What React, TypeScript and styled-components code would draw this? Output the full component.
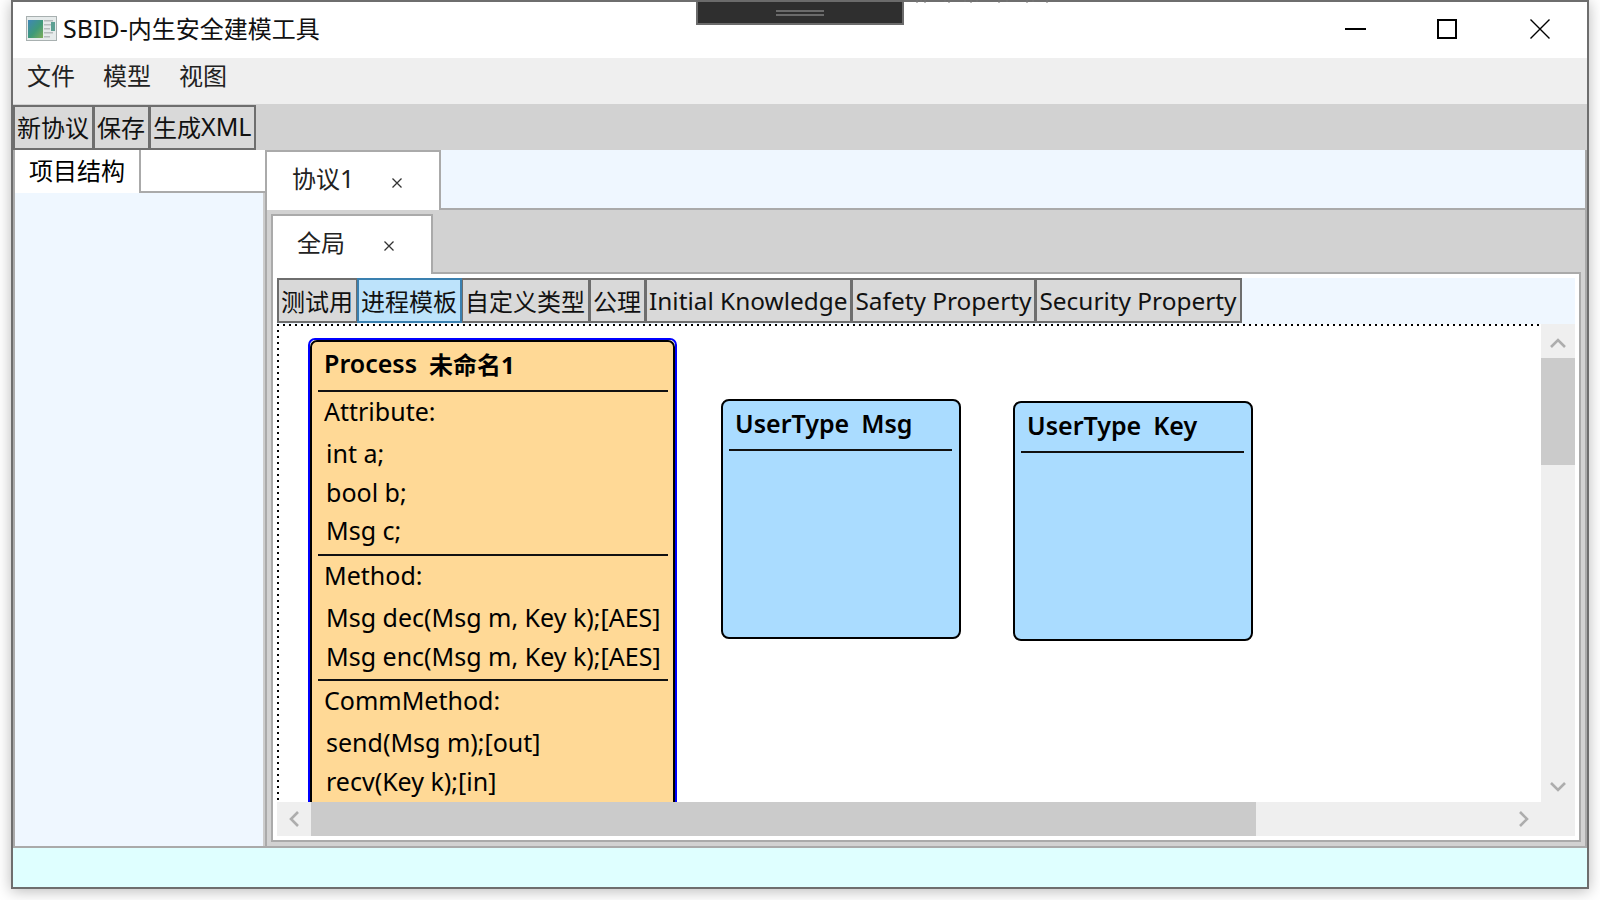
import React from "react";
import styled, { createGlobalStyle } from "styled-components";

const Global = createGlobalStyle`
  html, body { margin: 0; padding: 0; width: 1600px; height: 900px; background: #ffffff; overflow: hidden; }
  body { font-family: "Noto Sans", "Noto Sans CJK SC", sans-serif; font-size: 24px; color: #000; }
  * { box-sizing: border-box; }
`;

const Page = styled.div`
  position: relative;
  width: 1600px;
  height: 900px;
  padding-left: 11px;
  overflow: hidden;
`;
const Window = styled.div`
  width: 1578px;
  height: 889px;
  border: 2px solid #6e6e6e;
  background: #fff;
  box-shadow: 0 2px 14px rgba(0, 0, 0, 0.28);
  display: flex;
  flex-direction: column;
`;
const Lat = styled.span<{ $size?: number }>`
  font-size: ${(p) => p.$size ?? 24.4}px;
`;
const TitleBar = styled.header`
  height: 56px;
  flex: none;
  display: flex;
  align-items: center;
  background: #fff;
  padding-left: 13px;
`;
const AppIcon = styled.svg`
  width: 31px;
  height: 25px;
  margin-right: 6px;
  margin-top: -3px;
  flex: none;
`;
const TitleText = styled.div`
  line-height: 1;
  color: #111;
  white-space: nowrap;
  margin-top: -3px;
`;
const Controls = styled.div`
  margin-left: auto;
  margin-right: 2px;
  display: flex;
`;
const ControlButton = styled.div`
  width: 92px;
  height: 56px;
  padding-bottom: 2px;
  display: flex;
  align-items: center;
  justify-content: center;
`;
const CloseGlyph = styled.svg`
  width: 20px;
  height: 20px;
  margin-left: 2px;
`;
const MenuBar = styled.nav`
  height: 46px;
  flex: none;
  background: #efefef;
  display: flex;
  align-items: center;
  gap: 28px;
  padding: 0 0 13px 14px;
  color: #222;
`;
const ToolButton = styled.div<{ $active?: boolean }>`
  height: 45px;
  padding: 0 3px 0 2px;
  margin-right: -1px;
  position: relative;
  z-index: ${(p) => (p.$active ? 1 : 0)};
  display: flex;
  align-items: center;
  white-space: nowrap;
  border: 2px solid ${(p) => (p.$active ? "#3a80b0" : "#6e6e6e")};
  background: ${(p) => (p.$active ? "#bde3fb" : "#d9d9d9")};
  color: #111;
`;
const ToolBar = styled.div`
  height: 46px;
  flex: none;
  background: #d2d2d2;
  display: flex;
  align-items: center;
  ${ToolButton} {
    padding-bottom: 2px;
  }
`;
const Main = styled.div`
  flex: 1;
  min-height: 0;
  display: flex;
`;
const LeftPanel = styled.aside`
  width: 252px;
  flex: none;
  border-left: 2px solid #aaa;
  border-bottom: 2px solid #aaa;
  display: flex;
  flex-direction: column;
`;
const LeftStrip = styled.div`
  height: 43px;
  flex: none;
  display: flex;
  background: #fff;
`;
const LeftTab = styled.div`
  width: 126px;
  padding: 0 0 4px 14px;
  display: flex;
  align-items: center;
  border-right: 2px solid #aaa;
  background: #fff;
`;
const LeftStripRest = styled.div`
  flex: 1;
  border-bottom: 2px solid #aaa;
`;
const LeftPane = styled.div`
  flex: 1;
  background: #eff7ff;
  border-right: 2px solid #ccc;
`;
const RightPanel = styled.section`
  flex: 1;
  min-width: 0;
  display: flex;
  flex-direction: column;
  background: #d2d2d2;
  border-left: 2px solid #aaa;
  border-right: 2px solid #aaa;
  border-bottom: 2px solid #aaa;
`;
const TabStrip = styled.div`
  height: 60px;
  flex: none;
  display: flex;
  background: #eff7ff;
  border-bottom: 2px solid #aaa;
`;
const InnerStrip = styled.div`
  height: 60px;
  flex: none;
  display: flex;
  background: #d2d2d2;
  border-bottom: 2px solid #aaa;
`;
const DocTab = styled.div<{ $width: number; $inner?: boolean }>`
  width: ${(p) => p.$width}px;
  height: 60px;
  display: flex;
  align-items: center;
  background: #fff;
  border-top: 2px solid #aaa;
  border-right: 2px solid #aaa;
  border-left: ${(p) => (p.$inner ? "2px solid #aaa" : "none")};
  padding-left: ${(p) => (p.$inner ? 24 : 25)}px;
  padding-bottom: ${(p) => (p.$inner ? 8 : 8)}px;
  color: #222;
`;
const TabLabel = styled.span<{ $width: number }>`
  width: ${(p) => p.$width}px;
  flex: none;
  white-space: nowrap;
`;
const CloseMark = styled.svg<{ $drop: number }>`
  width: 12px;
  height: 12px;
  margin-top: ${(p) => p.$drop}px;
  flex: none;
`;
const OuterBody = styled.div`
  flex: 1;
  min-height: 0;
  padding: 4px;
  display: flex;
`;
const InnerPanel = styled.div`
  flex: 1;
  min-width: 0;
  display: flex;
  flex-direction: column;
`;
const Pane = styled.div`
  flex: 1;
  min-height: 0;
  background: #fff;
  padding: 4px;
  border-left: 2px solid #aaa;
  border-right: 2px solid #aaa;
  border-bottom: 2px solid #aaa;
  display: flex;
  flex-direction: column;
`;
const TemplateBar = styled.div`
  height: 46px;
  flex: none;
  display: flex;
  background: #eff7ff;
  align-items: flex-start;
`;
const ScrollArea = styled.div`
  flex: 1;
  min-height: 0;
  display: grid;
  grid-template-columns: 1fr 34px;
  grid-template-rows: 1fr 34px;
  background: #efefef;
`;
const Canvas = styled.div`
  position: relative;
  overflow: hidden;
  border-top: 2px solid transparent;
  border-left: 2px solid transparent;
  background-color: #fff;
  background-image: linear-gradient(90deg, #000 2px, transparent 2px),
    linear-gradient(180deg, #000 2px, transparent 2px);
  background-size: 6px 2px, 2px 6px;
  background-repeat: repeat-x, repeat-y;
  background-origin: border-box;
  background-position: 0 0, 0 0;
`;
const VBar = styled.div`
  display: flex;
  flex-direction: column;
  background: #efefef;
`;
const HBar = styled.div`
  display: flex;
  background: #efefef;
`;
const ArrowBox = styled.div<{ $down?: boolean }>`
  width: 34px;
  height: 34px;
  flex: none;
  display: flex;
  align-items: center;
  justify-content: center;
  padding-top: ${(p) => (p.$down ? 3 : 0)}px;
`;
const VThumb = styled.div`
  height: 107px;
  background: #cbcbcb;
`;
const HThumb = styled.div`
  width: 945px;
  background: #cbcbcb;
`;
const Spacer = styled.div`
  flex: 1;
`;
const Corner = styled.div`
  background: #efefef;
`;
const ProcessOutline = styled.div`
  position: absolute;
  left: 29px;
  top: 12px;
  width: 369px;
  height: 560px;
  border: 2px solid #0000ff;
  border-radius: 7px;
`;
const ProcessCard = styled.div`
  height: 100%;
  border: 2px solid #000;
  border-radius: 7px;
  background: #ffd996;
`;
const TypeCard = styled.div<{ $x: number; $y: number }>`
  position: absolute;
  left: ${(p) => p.$x}px;
  top: ${(p) => p.$y}px;
  width: 240px;
  height: 240px;
  border: 2px solid #000;
  border-radius: 8px;
  background: #aadcff;
`;
const CardTitle = styled.div<{ $lift: number }>`
  height: 48px;
  padding: 0 0 ${(p) => p.$lift}px 12px;
  display: flex;
  align-items: center;
  font-weight: 700;
  white-space: pre;
  color: #000;
`;
const TitleWord = styled.span`
  font-size: 25px;
  font-weight: 600;
  margin-right: 12px;
`;
const Divider = styled.div`
  height: 2px;
  margin: 0 5px 0 6px;
  background: #111;
`;
const TypeDivider = styled(Divider)`
  margin-right: 7px;
`;
const SectionLabel = styled.div`
  height: 40px;
  padding: 0 0 2px 12px;
  font-size: 25px;
  display: flex;
  align-items: center;
  white-space: nowrap;
`;
const SectionItems = styled.div<{ $bottom: number }>`
  padding: 2px 0 ${(p) => p.$bottom + 1}px 14px;
`;
const ItemRow = styled.div`
  height: 38.4px;
  font-size: 25px;
  display: flex;
  align-items: center;
  white-space: nowrap;
`;
const StatusBar = styled.footer`
  height: 39px;
  flex: none;
  background: #dfffff;
`;
const Handle = styled.div`
  position: absolute;
  left: 696px;
  top: 0;
  width: 208px;
  height: 25px;
  background: #2f2f2f;
  border: 2px solid #6b6b6b;
  display: flex;
  flex-direction: column;
  align-items: center;
  justify-content: center;
  gap: 2px;
`;
const HandleLine = styled.div`
  width: 48px;
  height: 2px;
  background: #6b6b6b;
`;
const PeekMarks = styled.svg`
  position: absolute;
  left: 915px;
  top: 0;
  width: 135px;
  height: 3px;
`;

const Close = ({ drop }: { drop: number }) => (
  <CloseMark $drop={drop} viewBox="0 0 12 12">
    <path d="M1.5 1.5l9 9M10.5 1.5l-9 9" stroke="#333" strokeWidth="1.3" fill="none" />
  </CloseMark>
);
const Chevron = ({ d, w, h, vb }: { d: string; w: number; h: number; vb: string }) => (
  <svg width={w} height={h} viewBox={vb}>
    <path d={d} stroke="#adadad" strokeWidth="2.6" fill="none" />
  </svg>
);

export default function App() {
  return (
    <Page>
      <Global />
      <Window>
        <TitleBar>
          <AppIcon viewBox="0 0 31 25">
            <defs>
              <linearGradient id="g" x1="0" y1="0" x2="1" y2="1">
                <stop offset="0" stopColor="#3f86b8" />
                <stop offset="0.55" stopColor="#3f9a78" />
                <stop offset="1" stopColor="#7fae5a" />
              </linearGradient>
            </defs>
            <rect x="0.5" y="0.5" width="30" height="24" fill="#e6ebeb" stroke="#a8b0b0" />
            <rect x="2" y="4" width="15" height="18" fill="url(#g)" />
            <rect x="18" y="4" width="9" height="1.5" fill="#b5bcbc" />
            <rect x="18" y="8" width="7" height="1.5" fill="#b5bcbc" />
            <rect x="25" y="6" width="4" height="9" fill="#5d9f92" />
            <rect x="18" y="12" width="6" height="1.5" fill="#b5bcbc" />
            <rect x="18" y="16" width="9" height="1.5" fill="#b5bcbc" />
            <rect x="18" y="20" width="6" height="1.5" fill="#b5bcbc" />
          </AppIcon>
          <TitleText>
            <Lat $size={25}>SBID-</Lat>内生安全建模工具
          </TitleText>
          <Controls>
            <ControlButton>
              <svg width="21" height="2" viewBox="0 0 21 2">
                <rect width="21" height="2" fill="#000" />
              </svg>
            </ControlButton>
            <ControlButton>
              <svg width="20" height="20" viewBox="0 0 20 20">
                <rect x="1" y="1" width="18" height="18" fill="none" stroke="#000" strokeWidth="2" />
              </svg>
            </ControlButton>
            <ControlButton>
              <CloseGlyph viewBox="0 0 20 20">
                <path d="M0.5 0.5l19 19M19.5 0.5l-19 19" stroke="#000" strokeWidth="1.4" fill="none" />
              </CloseGlyph>
            </ControlButton>
          </Controls>
        </TitleBar>
        <MenuBar>
          <span>文件</span>
          <span>模型</span>
          <span>视图</span>
        </MenuBar>
        <ToolBar>
          <ToolButton>新协议</ToolButton>
          <ToolButton>保存</ToolButton>
          <ToolButton>
            生成<Lat $size={25}>XML</Lat>
          </ToolButton>
        </ToolBar>
        <Main>
          <LeftPanel>
            <LeftStrip>
              <LeftTab>项目结构</LeftTab>
              <LeftStripRest />
            </LeftStrip>
            <LeftPane />
          </LeftPanel>
          <RightPanel>
            <TabStrip>
              <DocTab $width={174}>
                <TabLabel $width={99}>
                  协议<Lat $size={25}>1</Lat>
                </TabLabel>
                <Close drop={12} />
              </DocTab>
            </TabStrip>
            <OuterBody>
              <InnerPanel>
                <InnerStrip>
                  <DocTab $width={162} $inner>
                    <TabLabel $width={86}>全局</TabLabel>
                    <Close drop={10} />
                  </DocTab>
                </InnerStrip>
                <Pane>
                  <TemplateBar>
                    <ToolButton>测试用</ToolButton>
                    <ToolButton $active>进程模板</ToolButton>
                    <ToolButton>自定义类型</ToolButton>
                    <ToolButton>公理</ToolButton>
                    <ToolButton>
                      <Lat>Initial Knowledge</Lat>
                    </ToolButton>
                    <ToolButton>
                      <Lat>Safety Property</Lat>
                    </ToolButton>
                    <ToolButton>
                      <Lat>Security Property</Lat>
                    </ToolButton>
                  </TemplateBar>
                  <ScrollArea>
                    <Canvas>
                      <ProcessOutline>
                        <ProcessCard>
                          <CardTitle $lift={6}>
                            <TitleWord>Process</TitleWord>未命名1
                          </CardTitle>
                          <Divider />
                          <SectionLabel>Attribute:</SectionLabel>
                          <SectionItems $bottom={4}>
                            <ItemRow>int a;</ItemRow>
                            <ItemRow>bool b;</ItemRow>
                            <ItemRow>Msg c;</ItemRow>
                          </SectionItems>
                          <Divider />
                          <SectionLabel>Method:</SectionLabel>
                          <SectionItems $bottom={3}>
                            <ItemRow>Msg dec(Msg m, Key k);[AES]</ItemRow>
                            <ItemRow>Msg enc(Msg m, Key k);[AES]</ItemRow>
                          </SectionItems>
                          <Divider />
                          <SectionLabel>CommMethod:</SectionLabel>
                          <SectionItems $bottom={4}>
                            <ItemRow>send(Msg m);[out]</ItemRow>
                            <ItemRow>recv(Key k);[in]</ItemRow>
                          </SectionItems>
                        </ProcessCard>
                      </ProcessOutline>
                      <TypeCard $x={442} $y={73}>
                        <CardTitle $lift={4}>
                          <TitleWord>UserType</TitleWord>
                          <TitleWord>Msg</TitleWord>
                        </CardTitle>
                        <TypeDivider />
                      </TypeCard>
                      <TypeCard $x={734} $y={75}>
                        <CardTitle $lift={4}>
                          <TitleWord>UserType</TitleWord>
                          <TitleWord>Key</TitleWord>
                        </CardTitle>
                        <TypeDivider />
                      </TypeCard>
                    </Canvas>
                    <VBar>
                      <ArrowBox $down>
                        <Chevron vb="0 0 16 10" w={16} h={10} d="M1 9l7-7 7 7" />
                      </ArrowBox>
                      <VThumb />
                      <Spacer />
                      <ArrowBox $down>
                        <Chevron vb="0 0 16 10" w={16} h={10} d="M1 1l7 7 7-7" />
                      </ArrowBox>
                    </VBar>
                    <HBar>
                      <ArrowBox>
                        <Chevron vb="0 0 10 16" w={10} h={16} d="M9 1L2 8l7 7" />
                      </ArrowBox>
                      <HThumb />
                      <Spacer />
                      <ArrowBox>
                        <Chevron vb="0 0 10 16" w={10} h={16} d="M1 1l7 7-7 7" />
                      </ArrowBox>
                    </HBar>
                    <Corner />
                  </ScrollArea>
                </Pane>
              </InnerPanel>
            </OuterBody>
          </RightPanel>
        </Main>
        <StatusBar />
      </Window>
      <PeekMarks viewBox="0 0 135 3">
        <path
          d="M2 0v3M6 0v2M10 0v3M30 0v2M34 0v3M50 0v2M56 0v3M62 0v2M84 0v3M92 0v2M112 0v3M118 0v2M132 0v3"
          stroke="#777"
          strokeWidth="1"
        />
      </PeekMarks>
      <Handle>
        <HandleLine />
        <HandleLine />
      </Handle>
    </Page>
  );
}
